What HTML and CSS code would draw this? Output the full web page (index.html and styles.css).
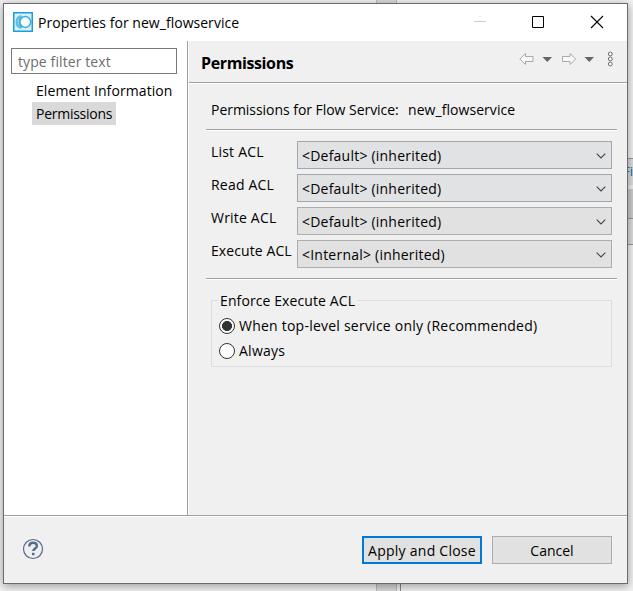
FILE: index.html
```html
<!DOCTYPE html>
<html lang="en">
<head>
<meta charset="utf-8">
<title>Properties for new_flowservice</title>
<link rel="stylesheet" href="styles.css">
</head>
<body>
<div class="backdrop">
  <i class="bar bar-top"></i><i class="bar bar-bottom"></i><i class="edge-line"></i>
  <div class="side"><div class="side-tab">Fi</div><div class="side-tool"></div><div class="side-head"></div><div class="side-body"></div></div>
</div>
<div class="window">
  <header class="titlebar">
    <svg class="app-icon" width="20" height="20" viewBox="0 0 20 20"><rect x=".75" y=".75" width="18.5" height="18.5" fill="#d8f0fa" stroke="#1b9fd4" stroke-width="1.5"/><path d="M8.5 4.2A5.9 5.9 0 0 0 8.5 15.8" fill="none" stroke="#62bde1" stroke-width="2.4"/><circle cx="12.3" cy="10" r="5.4" fill="#f4fcff" stroke="#3aaedb" stroke-width="1.5"/><path d="M9.5 4.8A5.7 5.7 0 0 0 9.5 15.2" fill="none" stroke="#3aaedb" stroke-width="1.2"/></svg>
    <span class="title">Properties for new_flowservice</span>
    <svg class="controls" width="132" height="14" viewBox="0 0 132 14" fill="none"><path d="M0 6.5H12" stroke="#ccc"/><path d="M58.5 1.5h11v11h-11z" stroke="#000"/><path d="M117 1l12 12M129 1l-12 12" stroke="#000" stroke-width="1.1"/></svg>
  </header>
  <div class="main">
    <nav class="tree">
      <input class="filter" placeholder="type filter text">
      <div class="item"><span class="t-elem">Element Information</span></div>
      <div class="item selected"><span class="t-perm">Permissions</span></div>
    </nav>
    <section class="page">
      <div class="page-head">
        <h1>Permissions</h1>
        <svg width="96" height="18" viewBox="0 0 96 18"><g fill="#f8f8f8" stroke="#aaa"><path d="M.8 9 6.5 3.5v3H14v5H6.5v3z"/><path d="M56.7 9 51 3.5v3h-7.500v5H51v3z"/></g><path d="M23.500 7h9.500l-4.700 5zM65.500 7h9.500l-4.700 5z" fill="#666"/><g fill="#fff" stroke="#666"><circle cx="91.300" cy="4" r="1.9"/><circle cx="91.300" cy="9" r="1.9"/><circle cx="91.300" cy="14" r="1.9"/></g></svg>
      </div>
      <div class="page-body">
        <div class="subject"><span class="t-subj">Permissions for Flow Service:</span><span class="t-name">new_flowservice</span></div>
        <div class="rule"></div>
        <div class="acls">
          <label>List ACL</label><div class="combo cool"><span>&lt;Default&gt; (inherited)</span><svg width="10" height="6"><path d="M.7.7 5 5 9.3.7" fill="none" stroke="#444" stroke-width="1.1"/></svg></div>
          <label>Read ACL</label><div class="combo cool"><span>&lt;Default&gt; (inherited)</span><svg width="10" height="6"><path d="M.7.7 5 5 9.3.7" fill="none" stroke="#444" stroke-width="1.1"/></svg></div>
          <label>Write ACL</label><div class="combo"><span>&lt;Default&gt; (inherited)</span><svg width="10" height="6"><path d="M.7.7 5 5 9.3.7" fill="none" stroke="#444" stroke-width="1.1"/></svg></div>
          <label class="t-exec">Execute ACL</label><div class="combo"><span>&lt;Internal&gt; (inherited)</span><svg width="10" height="6"><path d="M.7.7 5 5 9.3.7" fill="none" stroke="#444" stroke-width="1.1"/></svg></div>
        </div>
        <div class="rule"></div>
        <div class="group">
          <span class="legend">Enforce Execute ACL</span>
          <div class="radio on"><i></i><span class="t-when">When top-level service only (Recommended)</span></div>
          <div class="radio"><i></i><span class="t-always">Always</span></div>
        </div>
      </div>
    </section>
  </div>
  <footer>
    <svg class="help" width="22" height="22" viewBox="0 0 22 22" fill="none" stroke="#566a8c"><circle cx="11" cy="11" r="9.5" stroke-width="1.2"/><path d="M7.3 8.4C7.3 5.8 9 4.7 11 4.7s3.9 1.1 3.9 3.2c0 2.5-3.6 2.6-3.6 5.2" stroke-width="2.4"/><path d="M10 14.8h2.5v2.4H10z" fill="#566a8c" stroke="none"/></svg>
    <button class="primary">Apply and Close</button>
    <button class="cancel">Cancel</button>
  </footer>
</div>
</body>
</html>
```
FILE: styles.css
```css
* { box-sizing: border-box; }
body {
  margin: 0;
  width: 633px;
  height: 591px;
  overflow: hidden;
  padding: 3px;
  background: #f0f0f0;
  color: #000;
  font: 14px/20px "Open Sans", "Noto Sans", sans-serif;
}
.backdrop { position: absolute; inset: 0; overflow: hidden; background: #f2f2f2; }
.bar { position: absolute; left: 376px; width: 21px; background: #d9d9d9; border: solid #bbb; border-width: 0 1px; }
.bar-top { top: 0; height: 4px; }
.bar-bottom { bottom: 0; height: 8px; }
.edge-line { position: absolute; left: 400px; bottom: 0; width: 1px; height: 8px; background: #888; }
.side { position: absolute; left: 628px; top: 158px; width: 5px; font-size: 13px; line-height: 25px; }
.side-tab { height: 27px; border-top: 1px solid #999; background: #ddd; color: #1467b0; text-indent: -5px; overflow: hidden; }
.side-tool { height: 34px; background: #ccc; border: solid #999; border-width: 0 0 1px; border-top: 4px solid #eee; }
.side-head { height: 26px; background: #ddd; border-bottom: 1px solid #999; }
.side-body { height: 400px; background: #f2f2f2; }

.window {
  position: relative;
  width: 625px;
  height: 581px;
  display: flex;
  flex-direction: column;
  border: 1px solid #6b6b6b;
  background: #f0f0f0;
  box-shadow: 0 2px 9px rgba(0, 0, 0, .38);
}
.titlebar { display: flex; align-items: center; height: 37px; background: #fff; padding-left: 9px; }
.app-icon { margin-bottom: 1px; }
.title { margin-left: 5px; letter-spacing: .03px; }
.controls { margin: 0 21px 2px auto; }
.main { display: flex; height: 474px; }
.tree { width: 184px; background: #fff; border-right: 1px solid #a0a0a0; padding: 7px 0 0 7px; }
.filter {
  display: block;
  width: 166px;
  height: 26px;
  margin: 0 0 5px;
  padding: 0 6px;
  border: 1px solid #7a7a7a;
  font: inherit;
  letter-spacing: .1px;
}
.filter::placeholder { color: #6d6d6d; opacity: 1; }
.item { width: max-content; height: 23px; line-height: 23px; margin-left: 21px; padding: 0 4px; white-space: nowrap; }
.t-elem { letter-spacing: .09px; }
.selected { width: 84px; background: #d9d9d9; letter-spacing: -.26px; }
.page { flex: 1; border-left: 1px solid #fff; }
.page-head { display: flex; justify-content: space-between; height: 42px; padding: 9px 12px 0 12px; border-bottom: 1px solid #a0a0a0; box-shadow: 0 1px #fff; }
h1 { margin: 3px 0 0; font-size: 16px; line-height: 20px; font-weight: 700; letter-spacing: -.38px; }
.page-body { padding: 17px 10px 0 17px; }
.subject { height: 29px; padding-left: 5px; display: flex; }
.t-subj { width: 197px; letter-spacing: -.04px; }
.t-name { letter-spacing: .06px; }
.rule { height: 2px; background: #a0a0a0; border-bottom: 1px solid #fff; }
.acls { display: grid; grid-template-columns: 86px 315px; grid-auto-rows: 28px; row-gap: 5px; padding: 10px 0 10px 5px; white-space: nowrap; }
.acls label { line-height: 22px; letter-spacing: .2px; }
.acls .t-exec { letter-spacing: .09px; }
.combo { display: flex; align-items: center; justify-content: space-between; border: 1px solid #adadad; background: #e1e1e1; padding: 2px 5px 0 4px; letter-spacing: .22px; }
.combo svg { margin-bottom: 1px; }
.cool { background: #e0e2e4; border-color: #a0a7ae; }
.group { position: relative; height: 67px; width: 401px; margin: 20px 0 0 5px; border: 1px solid #dcdcdc; padding: 12px 0 0 7px; }
.legend { position: absolute; top: -10px; left: 6px; padding: 0 2px; background: #f0f0f0; white-space: nowrap; letter-spacing: .1px; }
.radio { display: flex; align-items: center; height: 25px; gap: 4px; }
.radio i { width: 16px; height: 16px; border: 1px solid #333; border-radius: 50%; background: #fff; }
.on i { background: radial-gradient(circle, #333 4.7px, #fff 5.3px); }
.t-when { letter-spacing: .23px; }
.t-always { letter-spacing: .25px; }
footer { display: flex; flex: 1; align-items: center; border-top: 1px solid #a0a0a0; box-shadow: inset 0 1px #fff; padding: 1px 15px 0 18px; gap: 10px; }
.help { margin-bottom: 2px; }
button { width: 120px; height: 28px; padding: 1px 0 0; border: 1px solid #adadad; background: #e1e1e1; font: inherit; color: #000; white-space: nowrap; }
.primary { margin-left: auto; border: 2px solid #0078d7; letter-spacing: .25px; }
```
